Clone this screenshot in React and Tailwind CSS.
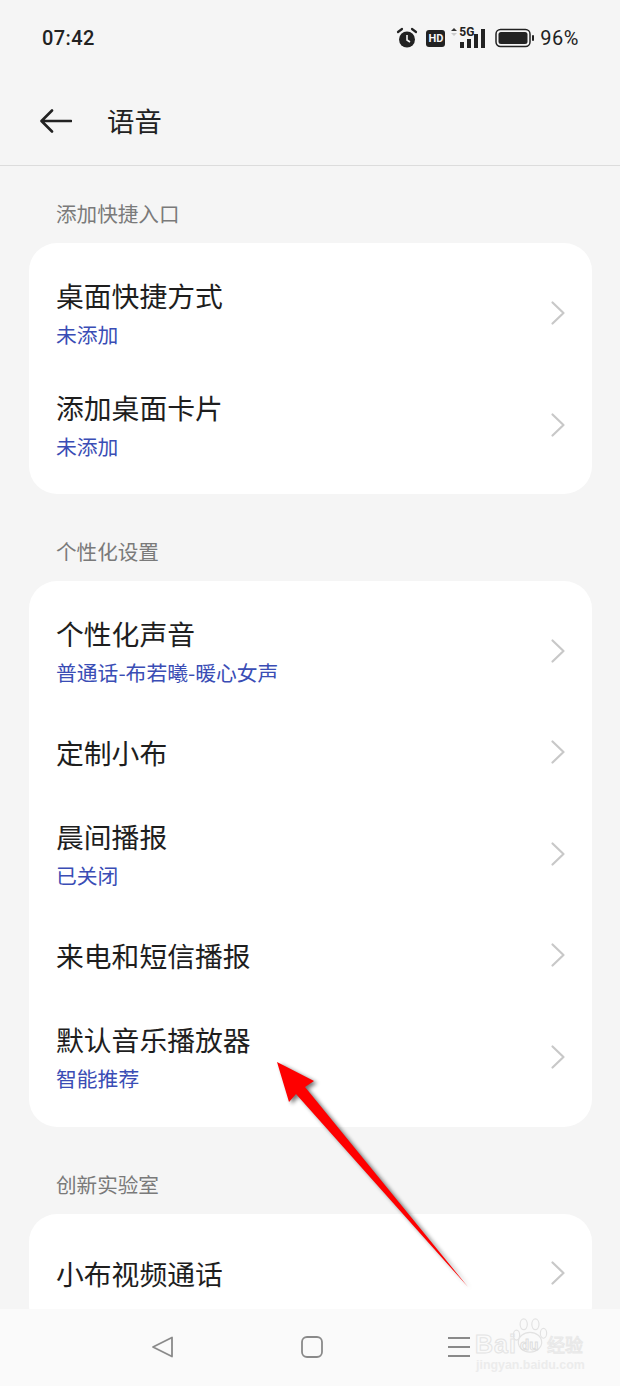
const Chevron = () => (
  <svg width="16" height="26" viewBox="0 0 16 26" className="mb-[1px]" fill="none" stroke="#c8c8c8" strokeWidth="2.2" strokeLinecap="round" strokeLinejoin="round">
    <path d="M2.5 2.5L13.5 13 2.5 23.5" />
  </svg>
)

const Row = ({ title, sub }) => (
  <div className={`flex items-center justify-between pl-[27px] pr-[26px] ${sub ? 'h-[112px]' : 'h-[91px]'}`}>
    <div className={`flex flex-col ${sub ? 'pt-[2px]' : 'pb-[2px]'}`}>
      <div className="text-[27.8px] leading-[38px] text-[#1e1e1e]">{title}</div>
      {sub && <div className="mt-[1px] text-[20.8px] leading-[38px] text-[#3a4db5]">{sub}</div>}
    </div>
    <Chevron />
  </div>
)

const Section = ({ label, top, bottom = 'pb-[14px]', children }) => (
  <div>
    <div className={`pl-[56px] mb-[16px] text-[20.6px] leading-[28px] text-[#7a7a7a] ${top}`}>{label}</div>
    <div className={`ml-[29px] mr-[28px] bg-white rounded-[28px] pt-[14px] ${bottom}`}>{children}</div>
  </div>
)

function StatusIcons() {
  return (
    <div className="flex items-center">
      {/* alarm */}
      <svg width="22" height="22" viewBox="0 0 22 22" className="mr-[8px]">
        <circle cx="11" cy="12.5" r="8" fill="#222" />
        <path d="M11 8v5l3 2" stroke="#f5f5f5" strokeWidth="1.6" fill="none" />
        <path d="M2 5l4-3M20 5l-4-3" stroke="#222" strokeWidth="2.2" strokeLinecap="round" />
      </svg>
      {/* HD */}
      <div className="w-[19px] h-[17px] rounded-[3px] bg-[#222] text-[#f5f5f5] text-[11px] leading-[17px] font-bold text-center mr-[6px]">HD</div>
      {/* 5G signal */}
      <div className="relative w-[36px] h-[22px] mr-[8px]">
        <svg width="36" height="22" viewBox="0 0 36 22" className="absolute left-0 top-0">
          <path d="M0 4l3-3 3 3z" fill="#333" />
          <path d="M0 6l3 3 3-3z" fill="#ccc" />
          <rect x="9" y="15" width="4" height="6" fill="#222" />
          <rect x="16" y="11" width="4" height="10" fill="#222" />
          <rect x="23" y="7" width="4" height="14" fill="#222" />
          <rect x="30" y="2" width="4" height="19" fill="#222" />
        </svg>
        <span className="absolute left-[8px] top-[-1px] text-[12px] leading-[13px] font-bold text-[#222] bg-[#f5f5f5]">5G</span>
      </div>
      {/* battery */}
      <svg width="40" height="20" viewBox="0 0 40 20" className="mr-[5px]">
        <rect x="1" y="1.5" width="34" height="17" rx="4.5" fill="none" stroke="#222" strokeWidth="1.5" />
        <rect x="3.5" y="4" width="29" height="12" rx="2.5" fill="#222" />
        <rect x="37" y="7" width="2" height="6" rx="1" fill="#222" />
      </svg>
      <span className="text-[20px] text-[#222] tracking-[0.5px]">96%</span>
    </div>
  )
}

export default function App() {
  return (
    <div className="relative w-[620px] h-[1386px] overflow-hidden flex flex-col bg-[#f5f5f5] font-['Noto_Sans_CJK_SC',sans-serif]">
      <div className="h-[76px] flex items-center justify-between pl-[42px] pr-[41px] font-['Roboto',sans-serif]">
        <span className="text-[20px] font-medium text-[#222] tracking-[0.4px]">07:42</span>
        <StatusIcons />
      </div>

      <div className="h-[90px] flex items-center pl-[40px] border-b border-[#dcdcdc]">
        <svg width="32" height="26" viewBox="0 0 32 26" fill="none" stroke="#222" strokeWidth="2.6" strokeLinecap="round" strokeLinejoin="round">
          <path d="M31 13H2M12 2.5L1.5 13 12 23.5" />
        </svg>
        <span className="ml-[35px] text-[27.4px] text-[#222]">语音</span>
      </div>

      <div className="flex-1 overflow-hidden">
        <Section label="添加快捷入口" top="pt-[33px]" bottom="pb-[13px]">
          <Row title="桌面快捷方式" sub="未添加" />
          <Row title="添加桌面卡片" sub="未添加" />
        </Section>
        <Section label="个性化设置" top="pt-[43px]">
          <Row title="个性化声音" sub="普通话-布若曦-暖心女声" />
          <Row title="定制小布" />
          <Row title="晨间播报" sub="已关闭" />
          <Row title="来电和短信播报" />
          <Row title="默认音乐播放器" sub="智能推荐" />
        </Section>
        <Section label="创新实验室" top="pt-[43px]">
          <Row title="小布视频通话" />
        </Section>
      </div>

      <div className="h-[77px] bg-[#fafafa] flex items-center pb-[2px]">
        <svg width="24" height="24" viewBox="0 0 24 24" className="ml-[151px]" fill="none" stroke="#8a8a8a" strokeWidth="1.8" strokeLinejoin="round">
          <path d="M21 2.5v19L2 12z" />
        </svg>
        <svg width="24" height="24" viewBox="0 0 24 24" className="ml-[125px]" fill="none" stroke="#8a8a8a" strokeWidth="1.8">
          <rect x="2" y="2" width="20" height="20" rx="5" />
        </svg>
        <svg width="24" height="24" viewBox="0 0 24 24" className="ml-[123px]" fill="none" stroke="#8a8a8a" strokeWidth="1.8">
          <path d="M1 3h22M1 12h22M1 21h22" />
        </svg>
      </div>

      {/* baidu watermark */}
      <div className="absolute left-[475px] top-[1318px] w-[115px] h-[56px] font-['Liberation_Sans',sans-serif]">
        <svg width="36" height="36" viewBox="0 0 40 40" className="absolute left-[37px] top-0" fill="#fafafa" stroke="#e2e2e2" strokeWidth="1.3">
          <ellipse cx="20" cy="27" rx="13" ry="11" />
          <ellipse cx="5" cy="19" rx="3.5" ry="5.5" />
          <ellipse cx="13" cy="7" rx="4" ry="6" />
          <ellipse cx="26" cy="7" rx="4" ry="6" />
          <ellipse cx="35" cy="17" rx="3.5" ry="5.5" />
        </svg>
        <span className="absolute left-0 top-[13px] text-[25px] leading-[26px] tracking-[1px] font-bold text-transparent [-webkit-text-stroke:1px_#e4e4e4]">Bai</span>
        <span className="absolute left-[45px] top-[17px] text-[15px] leading-[20px] font-bold text-transparent [-webkit-text-stroke:1px_#dedede]">du</span>
        <span className="absolute left-[72px] top-[13px] text-[18px] leading-[26px] font-['Noto_Sans_CJK_SC',sans-serif] text-transparent [-webkit-text-stroke:1px_#e8e8e8]">经验</span>
        <span className="absolute left-[1px] top-[39px] text-[12.4px] leading-[16px] font-bold text-[#ececec]">jingyan.baidu.com</span>
      </div>

      {/* red arrow */}
      <svg width="210" height="240" viewBox="0 0 210 240" className="absolute left-[270px] top-[1055px]">
        <defs>
          <filter id="arrowShadow" x="-20%" y="-20%" width="140%" height="140%">
            <feGaussianBlur stdDeviation="2" />
          </filter>
        </defs>
        <polygon points="7,7 44,26 35,32 198,232 26,39 19,47" fill="#000" opacity="0.55" filter="url(#arrowShadow)" transform="translate(3,2)" />
        <polygon points="7,7 44,26 35,32 198,232 26,39 19,47" fill="#fe0000" />
      </svg>
    </div>
  )
}
